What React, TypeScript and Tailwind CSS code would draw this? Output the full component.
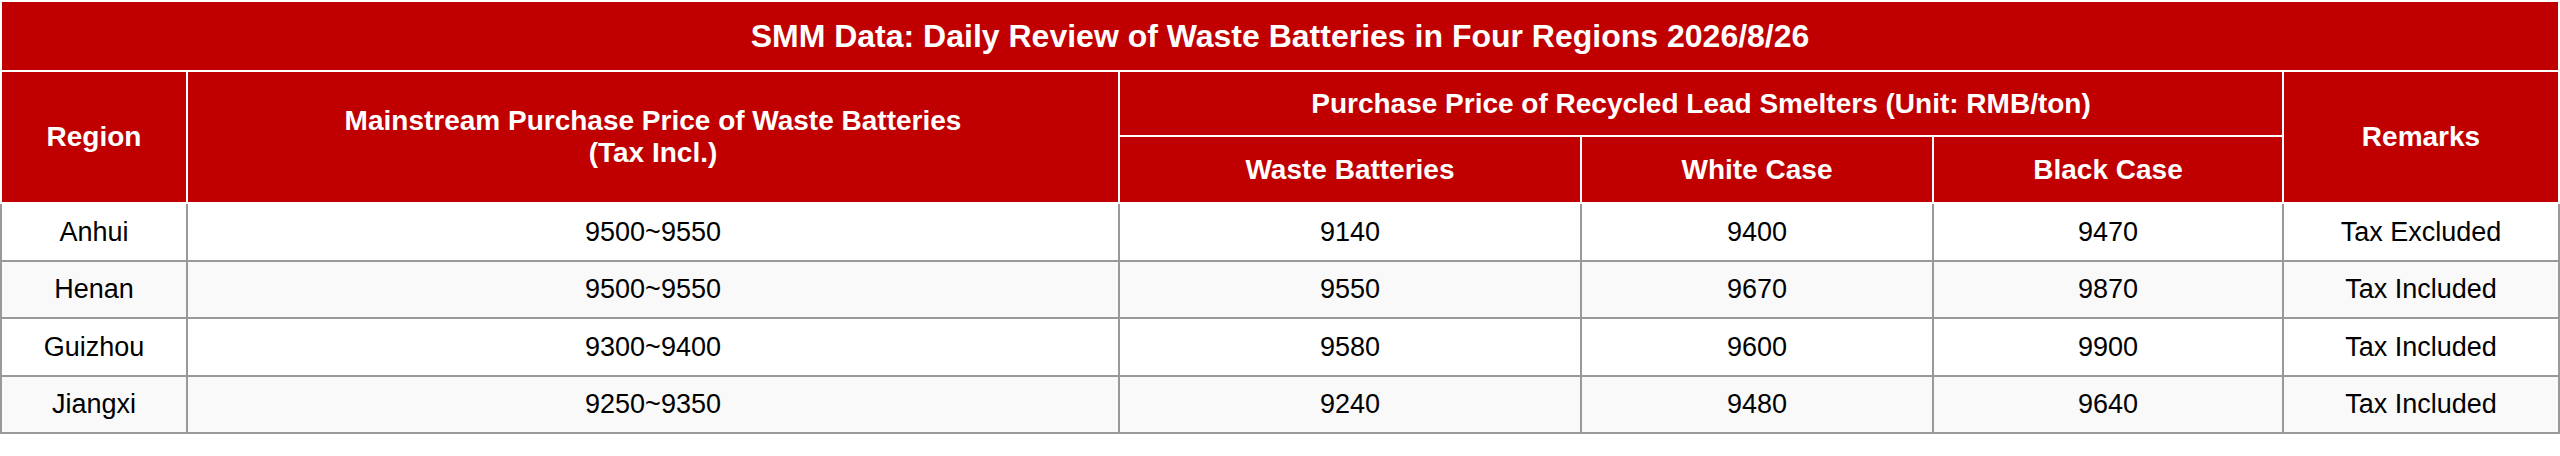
const COLS = 'grid-cols-[184px_930px_460px_350px_348px_274px]';

const rows = [
  { region: 'Anhui', mainstream: '9500~9550', waste: '9140', white: '9400', black: '9470', remarks: 'Tax Excluded' },
  { region: 'Henan', mainstream: '9500~9550', waste: '9550', white: '9670', black: '9870', remarks: 'Tax Included' },
  { region: 'Guizhou', mainstream: '9300~9400', waste: '9580', white: '9600', black: '9900', remarks: 'Tax Included' },
  { region: 'Jiangxi', mainstream: '9250~9350', waste: '9240', white: '9480', black: '9640', remarks: 'Tax Included' },
];

function Th({ children, className = '' }: { children: React.ReactNode; className?: string }) {
  return (
    <div className={`bg-[#c00000] text-white font-bold text-[28px] leading-[32px] flex items-center justify-center text-center ${className}`}>
      {children}
    </div>
  );
}

export default function App() {
  return (
    <div className="w-[2560px] bg-white font-['Liberation_Sans',Arial,sans-serif]">
      {/* Header */}
      <div className={`grid ${COLS} grid-rows-[68px_63px_65px] gap-[2px] p-[2px] bg-white`}>
        <Th className="col-span-6 text-[32px]">SMM Data: Daily Review of Waste Batteries in Four Regions 2026/8/26</Th>
        <Th className="row-span-2">Region</Th>
        <Th className="row-span-2">
          Mainstream Purchase Price of Waste Batteries
          <br />
          (Tax Incl.)
        </Th>
        <Th className="col-span-3">Purchase Price of Recycled Lead Smelters (Unit: RMB/ton)</Th>
        <Th className="row-span-2">Remarks</Th>
        <Th>Waste Batteries</Th>
        <Th>White Case</Th>
        <Th>Black Case</Th>
      </div>

      {/* Body */}
      <div className={`grid ${COLS} grid-rows-[repeat(4,55.5px)] gap-[2px] px-[2px] pb-[2px] bg-[#999999]`}>
        {rows.map((r, i) => {
          const bg = i % 2 === 1 ? 'bg-[#f9f9f9]' : 'bg-white';
          return [r.region, r.mainstream, r.waste, r.white, r.black, r.remarks].map((v, j) => (
            <div key={`${i}-${j}`} className={`${bg} text-black text-[27px] flex items-center justify-center`}>
              {v}
            </div>
          ));
        })}
      </div>
    </div>
  );
}
